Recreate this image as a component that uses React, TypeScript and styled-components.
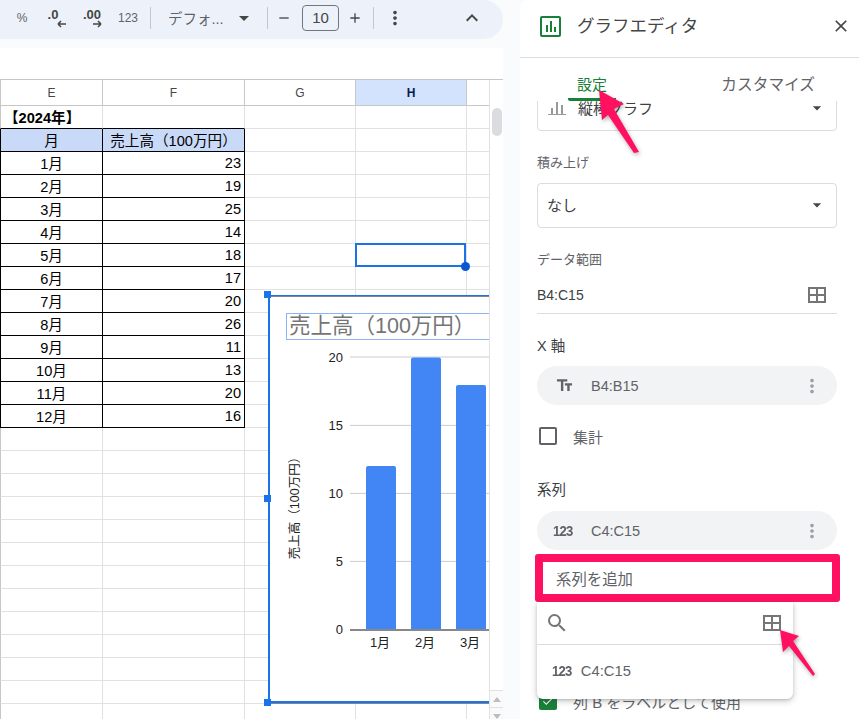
import styled, { createGlobalStyle } from 'styled-components';
import {
  MdAdd,
  MdArrowDropDown,
  MdCheck,
  MdClose,
  MdKeyboardArrowUp,
  MdMoreVert,
  MdRemove,
  MdSearch,
  MdTextFields,
} from 'react-icons/md';

const FONT = '"Liberation Sans", Roboto, "Noto Sans CJK JP", sans-serif';

const GlobalStyle = createGlobalStyle`
  html, body {
    margin: 0;
    padding: 0;
    background: #f9fbfd;
    font-family: ${FONT};
  }
`;

const Page = styled.div`
  position: relative;
  display: flex;
  width: 859px;
  height: 719px;
  overflow: hidden;
  background: #f9fbfd;
`;

const SheetColumn = styled.div`
  display: flex;
  flex-direction: column;
  width: 503px;
  margin-right: 17px;
`;

/* toolbar */
const Toolbar = styled.div`
  display: flex;
  align-items: center;
  flex: none;
  height: 39px;
  box-sizing: border-box;
  padding: 0 0 4px 4px;
  background: #edf2fa;
  border-radius: 0 20px 20px 0;
  color: #444746;
`;

const Tool = styled.div<{ $w: number }>`
  position: relative;
  display: flex;
  align-items: center;
  justify-content: center;
  flex: none;
  width: ${(p) => p.$w}px;
  height: 30px;
  font-size: 12px;
  color: #5f6368;
`;

const DecimalLabel = styled.span<{ $dx?: number }>`
  font-size: 13px;
  font-weight: 700;
  color: #444746;
  transform: translate(${(p) => p.$dx ?? 0}px, -3px);
`;

const DecimalArrow = styled.svg<{ $left: number }>`
  position: absolute;
  left: ${(p) => p.$left}px;
  top: 17px;
`;

const ToolSep = styled.div<{ $ml?: number; $mr?: number }>`
  flex: none;
  width: 1px;
  height: 22px;
  margin: 0 ${(p) => p.$mr ?? 8}px 0 ${(p) => p.$ml ?? 8}px;
  background: #c7c7c7;
`;

const FontPicker = styled.div`
  display: flex;
  align-items: center;
  flex: none;
  width: 100px;
  padding-left: 9px;
  box-sizing: border-box;
  font-size: 14.5px;
  color: #5f6368;
  justify-content: space-between;
  padding-right: 3px;
`;

const SizeBox = styled.div`
  display: flex;
  align-items: center;
  justify-content: center;
  flex: none;
  width: 37px;
  height: 26px;
  margin: 0 8px 0 10px;
  box-sizing: border-box;
  border: 1px solid #747775;
  border-radius: 4px;
  font-size: 15px;
  color: #444746;
`;

const Collapse = styled.div`
  display: flex;
  margin-left: auto;
  margin-right: 19px;
`;

const FormulaBar = styled.div`
  flex: none;
  height: 31px;
  margin-top: 9px;
  background: #fff;
`;

/* sheet */
const SheetArea = styled.div`
  position: relative;
  flex: 1;
  overflow: hidden;
  background: #fff;
  border-top: 1px solid #c7c7c7;
`;

const Row = styled.div<{ $head?: boolean }>`
  display: grid;
  grid-template-columns: 103px 142px 111px 111px 24px;
  height: ${(p) => (p.$head ? 26 : 23)}px;
`;

const Cell = styled.div<{
  $boxed?: boolean;
  $bottomBlack?: boolean;
  $first?: boolean;
  $fill?: boolean;
  $align?: string;
  $bold?: boolean;
}>`
  display: flex;
  align-items: center;
  justify-content: ${(p) => p.$align ?? 'flex-start'};
  box-sizing: border-box;
  padding: 0 3px 1px;
  font-size: 14.6px;
  font-weight: ${(p) => (p.$bold ? 700 : 400)};
  color: #000;
  white-space: nowrap;
  background: ${(p) => (p.$fill ? '#c9daf8' : '#fff')};
  border-right: 1px solid ${(p) => (p.$boxed ? '#000' : '#e1e1e1')};
  border-bottom: 1px solid
    ${(p) => (p.$boxed || p.$bottomBlack ? '#000' : '#e1e1e1')};
  border-left: ${(p) => (p.$first ? `1px solid ${p.$boxed ? '#000' : '#c7c7c7'}` : 'none')};
`;

const ColHead = styled.div<{ $active?: boolean; $first?: boolean }>`
  display: flex;
  align-items: center;
  justify-content: center;
  box-sizing: border-box;
  font-size: 12px;
  color: ${(p) => (p.$active ? '#041e49' : '#444746')};
  font-weight: ${(p) => (p.$active ? 700 : 400)};
  background: ${(p) => (p.$active ? '#d3e3fd' : '#fff')};
  border-left: ${(p) => (p.$first ? '1px solid #c7c7c7' : 'none')};
  border-right: 1px solid #c7c7c7;
  border-bottom: 1px solid #c7c7c7;
`;

const SelectedCell = styled.div`
  position: absolute;
  left: 355px;
  top: 163px;
  width: 111px;
  height: 24px;
  box-sizing: border-box;
  border: 2px solid #1a73e8;
  &::after {
    content: '';
    position: absolute;
    right: -6px;
    bottom: -6px;
    width: 9px;
    height: 9px;
    border-radius: 50%;
    background: #0b57d0;
  }
`;

const ScrollTrack = styled.div`
  position: absolute;
  left: 489px;
  top: 0;
  bottom: 0;
  width: 14px;
  background: #fff;
  border-left: 1px solid #e1e1e1;
`;

const ScrollThumb = styled.div`
  position: absolute;
  left: 2px;
  top: 28px;
  width: 10px;
  height: 28px;
  border-radius: 5px;
  background: #dadce0;
`;

const ScrollBtn = styled.div<{ $down?: boolean }>`
  position: absolute;
  left: 0;
  right: 0;
  top: ${(p) => (p.$down ? 627 : 610)}px;
  height: 17px;
  display: flex;
  align-items: center;
  justify-content: center;
  background: #fafafa;
  border-top: 1px solid #e1e1e1;
  &::after {
    content: '';
    border-left: 4px solid transparent;
    border-right: 4px solid transparent;
    ${(p) => (p.$down ? 'border-top' : 'border-bottom')}: 5px solid #bdbdbd;
  }
`;

/* chart */
const ChartBox = styled.div`
  position: absolute;
  left: 268px;
  top: 215px;
  width: 221px;
  height: 408px;
  box-sizing: border-box;
  background: #fff;
  border-top: 1px solid #1a73e8;
  border-left: 2px solid #1a73e8;
  border-bottom: 2px solid #1a73e8;
  box-shadow: inset 0 1px 0 #80868b, 0 1px 0 #80868b;
  padding: 17px 0 0 16px;
`;

const ChartClip = styled.div`
  margin-right: -1px;
  overflow: hidden;
`;

const ChartTitle = styled.div`
  height: 27px;
  box-sizing: border-box;
  margin-right: -10px;
  padding-left: 2px;
  border: 1px solid #8ab4f8;
  font-size: 21.5px;
  line-height: 25px;
  color: #757575;
  white-space: nowrap;
  overflow: hidden;
`;

const TitleRest = styled.span`
  margin-left: 14px;
`;

const ChartPlot = styled.svg`
  display: block;
  margin: 0 0 0 -18px;
  font-family: ${FONT};
`;

const Handle = styled.div<{ $top: number }>`
  position: absolute;
  left: 264px;
  top: ${(p) => p.$top}px;
  width: 7px;
  height: 7px;
  background: #1a73e8;
`;

/* editor panel */
const Panel = styled.div`
  display: flex;
  flex-direction: column;
  flex: none;
  width: 339px;
  height: 719px;
  background: #fff;
  border-top-left-radius: 8px;
  color: #3c4043;
`;

const PanelHeader = styled.div`
  display: flex;
  align-items: center;
  flex: none;
  height: 58px;
  box-sizing: border-box;
  padding: 0 8px 5px 20px;
  border-bottom: 1px solid #dadce0;
  color: #444746;
`;

const PanelTitle = styled.div`
  flex: 1;
  margin: 0 0 3px 16px;
  font-size: 17.5px;
  color: #444746;
`;

const Tabs = styled.div`
  display: flex;
  flex: none;
  height: 43px;
  padding: 0 44px 0 48px;
  justify-content: space-between;
  background: #fff;
  position: relative;
  z-index: 1;
`;

const Tab = styled.div<{ $active?: boolean }>`
  display: flex;
  align-items: center;
  justify-content: center;
  box-sizing: border-box;
  height: 43px;
  width: ${(p) => (p.$active ? '48px' : 'auto')};
  padding-top: 10px;
  font-size: ${(p) => (p.$active ? 15 : 15.7)}px;
  color: ${(p) => (p.$active ? '#188038' : '#5f6368')};
  border-bottom: 3px solid ${(p) => (p.$active ? '#188038' : 'transparent')};
  border-radius: 0 0 2px 2px;
`;

const ScrollArea = styled.div`
  flex: 1;
  overflow: hidden;
  padding: 0 22px 0 17px;
`;

const ScrollContent = styled.div`
  margin-top: -15px;
`;

const Select = styled.div<{ $mt?: number }>`
  display: flex;
  align-items: center;
  height: 45px;
  box-sizing: border-box;
  margin-top: ${(p) => p.$mt ?? 0}px;
  padding: 0 9px 2px 9px;
  border: 1px solid #dadce0;
  border-radius: 4px;
  font-size: 15px;
  color: #3c4043;
`;

const SelectText = styled.span<{ $ml?: number }>`
  flex: 1;
  margin-left: ${(p) => p.$ml ?? 0}px;
`;

const FieldLabel = styled.div<{ $mt: number; $strong?: boolean }>`
  height: 16px;
  line-height: 16px;
  margin-top: ${(p) => p.$mt}px;
  font-size: ${(p) => (p.$strong ? 14.5 : 13)}px;
  color: ${(p) => (p.$strong ? '#3c4043' : '#5f6368')};
`;

const RangeRow = styled.div`
  display: flex;
  align-items: center;
  justify-content: space-between;
  height: 35px;
  margin-top: 11px;
  box-sizing: border-box;
  border-bottom: 1px solid #dadce0;
  font-size: 14px;
  color: #3c4043;
  padding: 0 10px 2px 0;
`;

const Pill = styled.div<{ $mt: number }>`
  display: flex;
  align-items: center;
  height: 39px;
  margin-top: ${(p) => p.$mt}px;
  padding: 0 14px 0 17px;
  border-radius: 20px;
  background: #f1f3f4;
  font-size: 14.5px;
  color: #5f6368;
`;

const PillIcon = styled.div`
  display: flex;
  align-items: center;
  justify-content: center;
  flex: none;
  width: 20px;
  margin-right: 17px;
  color: #5f6368;
`;

const PillText = styled.span`
  flex: 1;
`;

const NumIcon = styled.span`
  display: inline-block;
  font-size: 14.5px;
  font-weight: 700;
  letter-spacing: -0.8px;
  color: #5f6368;
  transform: scaleX(0.9);
  transform-origin: left center;
`;

const CheckRow = styled.div<{ $mt: number }>`
  display: flex;
  align-items: center;
  height: 18px;
  margin: ${(p) => p.$mt}px 0 0 2px;
  font-size: 15px;
  color: #5f6368;
  white-space: nowrap;
`;

const Checkbox = styled.div<{ $on?: boolean }>`
  display: flex;
  align-items: center;
  justify-content: center;
  flex: none;
  width: 18px;
  height: 18px;
  margin-right: 16px;
  box-sizing: border-box;
  border: 2px solid ${(p) => (p.$on ? '#188038' : '#5f6368')};
  border-radius: 2px;
  background: ${(p) => (p.$on ? '#188038' : 'transparent')};
  color: #fff;
`;

const AddWrap = styled.div`
  position: relative;
  margin: 4px -3px 0 -2px;
`;

const AddField = styled.div`
  display: flex;
  align-items: center;
  height: 48px;
  box-sizing: border-box;
  padding-left: 13px;
  border: 8px solid #ff1060;
  border-radius: 3px;
  font-size: 15.4px;
  color: #5f6368;
`;

const Dropdown = styled.div`
  position: absolute;
  left: 2px;
  top: 48px;
  z-index: 2;
  width: 256px;
  height: 97px;
  background: #fff;
  border-radius: 0 0 6px 6px;
  box-shadow: 0 2px 6px rgba(60, 64, 67, 0.3), 0 1px 2px rgba(60, 64, 67, 0.15);
`;

const DropSearch = styled.div`
  display: flex;
  align-items: center;
  justify-content: space-between;
  height: 42px;
  padding: 0 11px 0 8px;
  border-bottom: 1px solid #dadce0;
  color: #757575;
`;

const DropItem = styled.div`
  display: flex;
  align-items: center;
  height: 52px;
  padding-left: 15px;
  font-size: 14.8px;
  color: #5f6368;
`;

const DropItemText = styled.span`
  margin-left: 7px;
`;

const Annotation = styled.svg`
  position: absolute;
  left: 0;
  top: 0;
  z-index: 5;
  pointer-events: none;
  filter: drop-shadow(1px 2px 2px rgba(0, 0, 0, 0.3));
`;

const sales = [23, 19, 25, 14, 18, 17, 20, 26, 11, 13, 20, 16];
const blankRows = Array.from({ length: 13 });

const GridIcon = () => (
  <svg width="20" height="20" viewBox="0 0 20 20" fill="none" stroke="#757575" strokeWidth="2">
    <rect x="2" y="3" width="16" height="14" />
    <path d="M10 3v14M2 10h16" />
  </svg>
);

const SheetsChartIcon = () => (
  <svg width="21" height="21" viewBox="0 0 21 21" fill="none">
    <rect x="1" y="1" width="19" height="19" rx="1" stroke="#188038" strokeWidth="2" />
    <path d="M6 9h2v7H6zM10 5h2v11h-2zM14 11h2v5h-2z" fill="#188038" />
  </svg>
);

const ColumnChartIcon = () => (
  <svg width="20" height="20" viewBox="0 0 20 20" fill="#9a9a9a">
    <path d="M1 16h18v1H1zM4 10h2v6H4zM9 4h2v12H9zM14 7h2v9h-2z" />
  </svg>
);

const ChartSvg = () => {
  const gridY = [17, 85.4, 153.4, 221.4];
  const labels = ['20', '15', '10', '5'];
  const bars = [
    { x: 98, top: 126 },
    { x: 143, top: 17.5 },
    { x: 188, top: 45 },
  ];
  return (
    <ChartPlot width="222" height="363" viewBox="0 0 222 363">
      {gridY.map((y, i) => (
        <g key={labels[i]}>
          <line x1="82" x2="222" y1={y} y2={y} stroke="#ccc" />
          <text x="75" y={y + 5} textAnchor="end" fontSize="13" fill="#222">
            {labels[i]}
          </text>
        </g>
      ))}
      <text x="75" y="294" textAnchor="end" fontSize="13" fill="#222">
        0
      </text>
      {bars.map((b) => (
        <path
          key={b.x}
          d={`M${b.x} 289v-${289 - b.top - 2}q0-2 2-2h26q2 0 2 2v${289 - b.top - 2}z`}
          fill="#4285f4"
        />
      ))}
      <rect x="82" y="289" width="140" height="2" fill="#888" />
      {['1月', '2月', '3月'].map((m, i) => (
        <text key={m} x={112 + i * 45} y="307" textAnchor="middle" fontSize="13" fill="#222">
          {m}
        </text>
      ))}
      <text
        transform="translate(31 165) rotate(-90)"
        textAnchor="middle"
        fontSize="12.5"
        fill="#222"
      >
        売上高（100万円）
      </text>
    </ChartPlot>
  );
};

export default function App() {
  return (
    <Page>
      <GlobalStyle />
      <SheetColumn>
        <Toolbar>
          <Tool $w={36}>%</Tool>
          <Tool $w={30}>
            <DecimalLabel $dx={-2}>.0</DecimalLabel>
            <DecimalArrow $left={17} width="10" height="8" viewBox="0 0 10 8">
              <path d="M1 4h8M1 4l3-3M1 4l3 3" stroke="#444746" strokeWidth="1.5" fill="none" />
            </DecimalArrow>
          </Tool>
          <Tool $w={44}>
            <DecimalLabel>.00</DecimalLabel>
            <DecimalArrow $left={22} width="10" height="8" viewBox="0 0 10 8">
              <path d="M1 4h8M9 4l-3-3M9 4l-3 3" stroke="#444746" strokeWidth="1.5" fill="none" />
            </DecimalArrow>
          </Tool>
          <Tool $w={28}>123</Tool>
          <ToolSep />
          <FontPicker>
            デフォ...
            <MdArrowDropDown size={24} color="#444746" />
          </FontPicker>
          <ToolSep />
          <Tool $w={16}>
            <MdRemove size={18} color="#444746" />
          </Tool>
          <SizeBox>10</SizeBox>
          <Tool $w={16}>
            <MdAdd size={20} color="#444746" />
          </Tool>
          <ToolSep $ml={10} $mr={0} />
          <Tool $w={42}>
            <MdMoreVert size={22} color="#444746" />
          </Tool>
          <Collapse>
            <MdKeyboardArrowUp size={24} color="#444746" />
          </Collapse>
        </Toolbar>
        <FormulaBar />
        <SheetArea>
          <Row $head>
            <ColHead $first>E</ColHead>
            <ColHead>F</ColHead>
            <ColHead>G</ColHead>
            <ColHead $active>H</ColHead>
            <ColHead />
          </Row>
          <Row>
            <Cell $first $bottomBlack $bold>
              【2024年】
            </Cell>
            <Cell $bottomBlack />
            <Cell />
            <Cell />
            <Cell />
          </Row>
          <Row>
            <Cell $first $boxed $fill $align="center">
              月
            </Cell>
            <Cell $boxed $fill $align="center">
              売上高（100万円）
            </Cell>
            <Cell />
            <Cell />
            <Cell />
          </Row>
          {sales.map((value, i) => (
            <Row key={i}>
              <Cell $first $boxed $align="center">
                {i + 1}月
              </Cell>
              <Cell $boxed $align="flex-end">
                {value}
              </Cell>
              <Cell />
              <Cell />
              <Cell />
            </Row>
          ))}
          {blankRows.map((_, i) => (
            <Row key={i}>
              <Cell $first />
              <Cell />
              <Cell />
              <Cell />
              <Cell />
            </Row>
          ))}
          <SelectedCell />
          <ChartBox>
            <ChartClip>
              <ChartTitle>
                売上高（100万円）<TitleRest>と月</TitleRest>
              </ChartTitle>
              <ChartSvg />
            </ChartClip>
          </ChartBox>
          <Handle $top={211} />
          <Handle $top={415} />
          <Handle $top={619} />
          <ScrollTrack>
            <ScrollThumb />
            <ScrollBtn />
            <ScrollBtn $down />
          </ScrollTrack>
        </SheetArea>
      </SheetColumn>

      <Panel>
        <PanelHeader>
          <SheetsChartIcon />
          <PanelTitle>グラフエディタ</PanelTitle>
          <MdClose size={20} />
        </PanelHeader>
        <Tabs>
          <Tab $active>設定</Tab>
          <Tab>カスタマイズ</Tab>
        </Tabs>
        <ScrollArea>
          <ScrollContent>
            <Select>
              <ColumnChartIcon />
              <SelectText $ml={11}>縦棒グラフ</SelectText>
              <MdArrowDropDown size={20} color="#444746" />
            </Select>
            <FieldLabel $mt={24}>積み上げ</FieldLabel>
            <Select $mt={12}>
              <SelectText>なし</SelectText>
              <MdArrowDropDown size={20} color="#444746" />
            </Select>
            <FieldLabel $mt={24}>データ範囲</FieldLabel>
            <RangeRow>
              B4:C15
              <GridIcon />
            </RangeRow>
            <FieldLabel $mt={24} $strong>
              X 軸
            </FieldLabel>
            <Pill $mt={12}>
              <PillIcon>
                <MdTextFields size={19} />
              </PillIcon>
              <PillText>B4:B15</PillText>
              <MdMoreVert size={22} color="#9aa0a6" />
            </Pill>
            <CheckRow $mt={22}>
              <Checkbox />
              集計
            </CheckRow>
            <FieldLabel $mt={37} $strong>
              系列
            </FieldLabel>
            <Pill $mt={13}>
              <PillIcon>
                <NumIcon>123</NumIcon>
              </PillIcon>
              <PillText>C4:C15</PillText>
              <MdMoreVert size={22} color="#9aa0a6" />
            </Pill>
            <AddWrap>
              <AddField>系列を追加</AddField>
              <Dropdown>
                <DropSearch>
                  <MdSearch size={24} />
                  <GridIcon />
                </DropSearch>
                <DropItem>
                  <NumIcon>123</NumIcon>
                  <DropItemText>C4:C15</DropItemText>
                </DropItem>
              </Dropdown>
            </AddWrap>
            <CheckRow $mt={90}>
              <Checkbox $on>
                <MdCheck size={16} />
              </Checkbox>
              列 B をラベルとして使用
            </CheckRow>
          </ScrollContent>
        </ScrollArea>
      </Panel>

      <Annotation width="859" height="719" viewBox="0 0 859 719">
        <polygon points="599,90 624,104 614,109 639,152 634,153 608,115 602,120" fill="#ff1060" />
        <polygon points="780,630 799,636 793,641 815,674 813,676 789,646 783,652" fill="#ff1060" />
      </Annotation>
    </Page>
  );
}
